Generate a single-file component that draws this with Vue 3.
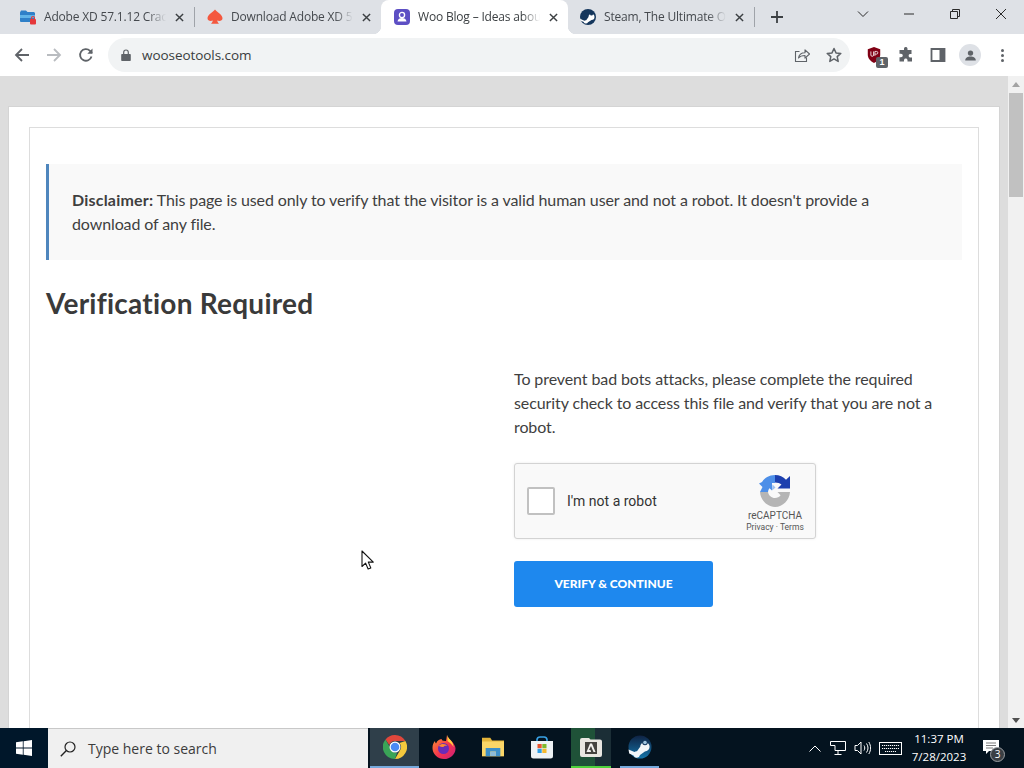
<script setup>
const taskApps = ['chrome', 'firefox', 'folder', 'store', 'adobe', 'steam']
</script>

<template>
  <div class="screen">
    <header class="tabstrip">
      <div class="tab">
        <svg class="fav" viewBox="0 0 16 16"><path d="M0 3.500 1 1.500h5l1.500 1.500H14l1 1V13H1a1 1 0 0 1-1-1z" fill="#2f80c8"/><path d="M0 6h15v3H0z" fill="#61b4e8"/><rect x="10" y="10" width="6" height="5.500" rx="1" fill="#e5383b"/><path d="M11.500 10.500V9a1.500 1.500 0 0 1 3 0v1.500" fill="none" stroke="#e5383b" stroke-width="1.100"/></svg>
        <span class="title">Adobe XD 57.1.12 Crack + Keygen</span>
        <svg class="close" viewBox="0 0 10 10"><path d="M1 1l8 8M9 1l-8 8"/></svg>
      </div>
      <i class="sep"></i>
      <div class="tab">
        <svg class="fav" viewBox="0 0 16 16"><path d="M8 .5C10 3.500 15.500 5.500 15.500 9.200c0 2.300-2.700 3.500-5.300 2.300.3 1.300.8 2.300 1.800 3.200H4c1-.9 1.500-1.900 1.800-3.200C3.200 12.700.5 11.500.5 9.200.5 5.500 6 3.500 8 .5z" fill="#f4583f"/></svg>
        <span class="title">Download Adobe XD 57.1.12 Free</span>
        <svg class="close" viewBox="0 0 10 10"><path d="M1 1l8 8M9 1l-8 8"/></svg>
      </div>
      <div class="tab active">
        <svg class="fav" viewBox="0 0 16 16"><rect width="16" height="16" rx="4" fill="#5d4fc4"/><circle cx="8" cy="6" r="2.600" fill="none" stroke="#fff" stroke-width="1.300"/><path d="M3.500 12.500c.3-2.500 2.200-3.500 4.500-3.500s4.200 1 4.500 3.500z" fill="#fff"/></svg>
        <span class="title">Woo Blog – Ideas about WordPress</span>
        <svg class="close" viewBox="0 0 10 10"><path d="M1 1l8 8M9 1l-8 8"/></svg>
      </div>
      <div class="tab last">
        <svg class="fav" viewBox="0 0 16 16"><circle cx="8" cy="8" r="8" fill="#14365c"/><path d="M0 9.800l4.400 1.900a2.300 2.300 0 0 1 1.800-.5L8.500 8a3 3 0 1 1 3 3L8 13.200A2.300 2.300 0 0 1 3.700 13L.4 11.500z" fill="#fff"/><circle cx="11.500" cy="5" r="1.500" fill="#14365c"/></svg>
        <span class="title">Steam, The Ultimate Online Game</span>
        <svg class="close" viewBox="0 0 10 10"><path d="M1 1l8 8M9 1l-8 8"/></svg>
      </div>
      <i class="sep"></i>
      <svg class="plus" viewBox="0 0 12 12"><path d="M6 0v12M0 6h12"/></svg>
      <div class="fill"></div>
      <div class="winctl">
        <svg viewBox="0 0 12 12"><path d="M1 3.500l5 5 5-5"/></svg>
        <svg viewBox="0 0 12 12"><path d="M1 6h10"/></svg>
        <svg viewBox="0 0 12 12"><path d="M1.500 3.500h7v7h-7zM3.500 3.500v-2h7v7h-2"/></svg>
        <svg viewBox="0 0 12 12"><path d="M1 1l10 10M11 1L1 11"/></svg>
      </div>
    </header>

    <nav class="toolbar">
      <svg class="nav" viewBox="0 0 16 16"><path d="M15 8H2M8 2 2 8l6 6" stroke="#5f6368"/></svg>
      <svg class="nav" viewBox="0 0 16 16"><path d="M1 8h13M8 2l6 6-6 6" stroke="#b9bcc0"/></svg>
      <svg class="nav" viewBox="0 0 16 16"><path d="M13.500 9.500A5.800 5.800 0 1 1 12 3.800L14 6" stroke="#5f6368"/><path d="M14.500 1.500v5.200H9.300z" fill="#5f6368"/></svg>
      <div class="omnibox">
        <svg class="lock" viewBox="0 0 10 12"><path d="M1 5h8a.8.8 0 0 1 .8.8v5.400A.8.8 0 0 1 9 12H1a.8.8 0 0 1-.8-.8V5.800A.8.8 0 0 1 1 5z" fill="#5f6368"/><path d="M2.700 5V3.300a2.300 2.300 0 0 1 4.600 0V5" fill="none" stroke="#5f6368" stroke-width="1.200"/></svg>
        <span class="url">wooseotools.com</span>
        <div class="fill"></div>
        <svg class="ombtn" viewBox="0 0 16 16"><path d="M5.500 4.500H1.500v10h11v-4" fill="none" stroke="#5f6368" stroke-width="1.100"/><path d="M4.500 11c.5-3.500 3-5.300 6.500-5.300V2.800l4.500 4.200-4.500 4.200V8.500c-2.700 0-5 .6-6.500 2.500z" fill="none" stroke="#5f6368" stroke-width="1.100" stroke-linejoin="round"/></svg>
        <svg class="ombtn" viewBox="0 0 16 16"><path d="M8 1.500l2 4.400 4.800.5-3.600 3.200 1 4.800L8 11.900l-4.200 2.500 1-4.800L1.200 6.400 6 5.900z" fill="none" stroke="#5f6368" stroke-width="1.500" stroke-linejoin="round"/></svg>
      </div>
      <div class="ext ublock">
        <svg viewBox="0 0 16 18"><path d="M8 0l7 2.500v6c0 4.500-3 7.500-7 9.500-4-2-7-5-7-9.500v-6z" fill="#800014"/><path d="M4.500 5v4a1.500 1.500 0 0 0 3 0V5M9 10V5h1.800a1.500 1.500 0 0 1 0 3H9" fill="none" stroke="#fff" stroke-width=".9"/></svg>
        <b class="badge">1</b>
      </div>
      <div class="ext">
        <svg viewBox="0 0 16 16"><path d="M6 1.500a1.800 1.800 0 0 1 3.500 0V3h4v4h-1.500a1.800 1.800 0 0 0 0 3.500H14v4H9.500V13a1.800 1.800 0 0 0-3.500 0v1.500H1.500V10.300H3a1.800 1.800 0 0 0 0-3.600H1.500V3H6z" fill="#5f6368"/></svg>
      </div>
      <div class="ext">
        <svg viewBox="0 0 16 16"><path d="M1.500 2h13v12h-13z" fill="none" stroke="#5f6368" stroke-width="1.800"/><path d="M9.500 2h5v12h-5z" fill="#5f6368"/></svg>
      </div>
      <div class="ext avatar">
        <svg viewBox="0 0 16 16"><circle cx="8" cy="5" r="3.300" fill="#5f6368"/><path d="M1.500 14c0-3.300 3-4.800 6.500-4.800s6.500 1.500 6.500 4.800z" fill="#5f6368"/></svg>
      </div>
      <div class="ext dots"><i></i><i></i><i></i></div>
    </nav>

    <div class="viewport">
      <main class="page">
        <article class="card">
          <section class="inner">
            <blockquote class="disclaimer"><strong>Disclaimer:</strong> This page is used only to verify that the visitor is a valid human user and not a robot. It doesn't provide a download of any file.</blockquote>
            <h2 class="heading">Verification Required</h2>
            <div class="columns">
              <div></div>
              <div class="verify">
                <p class="lead">To prevent bad bots attacks, please complete the required security check to access this file and verify that you are not a robot.</p>
                <div class="captcha">
                  <span class="check"></span>
                  <span class="robot">I'm not a robot</span>
                  <div class="brand">
                    <svg class="rc" viewBox="0 0 32 32">
                      <path d="M1 17h8c.6 3.500 3.500 6 7 6 2.300 0 4.300-1 5.600-2.700L18.500 17H31C30.500 25 24 32 16 32S1.500 25 1 17z" fill="#b5b5b5"/>
                      <path d="M0 8.500l3.500 3.500 0 0L1 17h8c.2-1.500.6-2.700 1.500-3.800L13 15.500V8h3V0C10 0 5.500 3 3 7z" fill="#4d8fe8"/>
                      <path d="M16 0c4.500 0 8.300 1.800 11 4.800L31 1v12.500H18.500l4-4C21 8.300 18.700 7.500 16 7.500z" fill="#1c3fae"/>
                      <path d="M13 15.500l3.500-3-3-3z" fill="#9cc0f0"/>
                    </svg>
                    <span class="rc-name">reCAPTCHA</span>
                    <span class="rc-links">Privacy · Terms</span>
                  </div>
                </div>
                <button class="continue">VERIFY &amp; CONTINUE</button>
              </div>
            </div>
          </section>
        </article>
      </main>
      <aside class="scrollbar">
        <i class="arrow up"></i>
        <i class="thumb"></i>
        <div class="fill"></div>
        <i class="arrow down"></i>
      </aside>
    </div>

    <footer class="taskbar">
      <div class="start">
        <svg viewBox="0 0 16 16"><path d="M0 2.300 6.800 1.300v6.300H0zM7.600 1.200 16 0v7.600H7.600zM0 8.400h6.800v6.300L0 13.700zM7.600 8.400H16V16l-8.400-1.200z" fill="#fff"/></svg>
      </div>
      <div class="search">
        <svg viewBox="0 0 16 16"><circle cx="10" cy="6" r="5" fill="none" stroke="#222" stroke-width="1.200"/><path d="M6.400 9.600.8 15.200" stroke="#222" stroke-width="1.400"/></svg>
        <span>Type here to search</span>
      </div>
      <div v-for="app in taskApps" :key="app" class="app" :class="app">
        <svg v-if="app === 'chrome'" viewBox="0 0 24 24"><path d="M12 0a12 12 0 0 1 10.400 6H12a6 6 0 0 0-5.700 4L2.500 4.500A12 12 0 0 1 12 0z" fill="#e0473c"/><path d="M22.400 6A12 12 0 0 1 12 24l5.200-9A6 6 0 0 0 16.500 8z" fill="#f5c93d"/><path d="M12 24A12 12 0 0 1 2.500 4.500L7.600 13.500A6 6 0 0 0 14 17.700z" fill="#3aa457"/><circle cx="12" cy="12" r="5.500" fill="#fff"/><circle cx="12" cy="12" r="4.300" fill="#4a8af4"/></svg>
        <svg v-else-if="app === 'firefox'" viewBox="0 0 24 24"><defs><linearGradient id="ff" x1="0" y1="0" x2="1" y2="1"><stop offset="0" stop-color="#ff9a2e"/><stop offset=".55" stop-color="#f5334f"/><stop offset="1" stop-color="#c81e7a"/></linearGradient></defs><path d="M15 0c.5 3 2.500 4 4 5.500 3 3 4.500 6 4.500 8A11.500 10.500 0 0 1 12 24 11.500 11 0 0 1 .5 13c0-3 1-5.500 2.500-7 0 1 .5 2 1 2.500C5.500 5 8 4 10 4c-1 1 1 2 4 2 .5-2 .5-4 1-6z" fill="url(#ff)"/><path d="M15.500 0c.2 3 3 4.500 4.500 7 1.200 2 1.500 4 1.500 5-1.500-3-4-4.500-6-6z" fill="#ffd23f"/><circle cx="11.500" cy="13.500" r="5.500" fill="#6a2bb8"/><path d="M6.500 11c3-3 7-2.500 9 0-2-.5-3.500 0-4 1-2 0-3.500-.5-5-1z" fill="#ff8a2e"/></svg>
        <svg v-else-if="app === 'folder'" viewBox="0 0 24 24"><path d="M0 2h9l2 3h13v17H0z" fill="#e5b53a"/><path d="M0 6h24v16H0z" fill="#fbd667"/><path d="M4 13h16v9h-5v-5H9v5H4z" fill="#3d8fc8"/><path d="M9 17h6v5H9z" fill="#8dbbd8"/></svg>
        <svg v-else-if="app === 'store'" viewBox="0 0 24 24"><path d="M7 7V4.500A3 3 0 0 1 10 2h4a3 3 0 0 1 3 2.500V7" fill="none" stroke="#39a2e6" stroke-width="1.600"/><path d="M1 6h22v15a2.500 2.500 0 0 1-2.500 2.500h-17A2.500 2.500 0 0 1 1 21z" fill="#eef2f5"/><rect x="7.500" y="9" width="4.200" height="4.200" fill="#e8552f"/><rect x="12.300" y="9" width="4.200" height="4.200" fill="#7eb92e"/><rect x="7.500" y="13.800" width="4.200" height="4.200" fill="#2e9ee6"/><rect x="12.300" y="13.800" width="4.200" height="4.200" fill="#f5b82e"/></svg>
        <svg v-else-if="app === 'adobe'" viewBox="0 0 22 20"><path d="M0 3a2 2 0 0 1 2-2h7l1.500 1.500H20a2 2 0 0 1 2 2V18a2 2 0 0 1-2 2H2a2 2 0 0 1-2-2z" fill="#e9e6e1"/><rect x="5" y="5" width="12" height="12" fill="#45423f"/><path d="M6.500 15 10 6.500h2L15.500 15h-2L11 9l-2 4h1.500l.6 2z" fill="#f3f1ee"/></svg>
        <svg v-else viewBox="0 0 24 24"><defs><linearGradient id="st" x1="0" y1="0" x2="0" y2="1"><stop offset="0" stop-color="#0f2344"/><stop offset="1" stop-color="#1474a8"/></linearGradient></defs><circle cx="12" cy="12" r="11.500" fill="url(#st)"/><path d="M.5 14.500l6 2.500a3.300 3.300 0 0 1 2.500-.7l3.200-4.500a4.700 4.700 0 1 1 4.700 4.700L12 20a3.400 3.400 0 0 1-6.500.5L1.200 18.500z" fill="#f2f6f9"/><circle cx="17" cy="7.500" r="2.800" fill="#12375e"/><circle cx="17" cy="7.500" r="1.800" fill="#9fc5e0"/></svg>
      </div>
      <div class="fill"></div>
      <div class="tray">
        <svg class="t-chev" viewBox="0 0 12 7"><path d="M.5 6.500 6 1l5.500 5.500" fill="none" stroke="#fff"/></svg>
        <svg class="t-net" viewBox="0 0 16 14"><path d="M.5.500h15v9H5V4.500H.5zM8 9.500v3.500M4.500 13.500h7" fill="none" stroke="#fff"/></svg>
        <svg class="t-vol" viewBox="0 0 17 14"><path d="M1 4.500h2.500L7 1v12L3.500 9.500H1z" fill="none" stroke="#fff"/><path d="M10 4.500c1 1.500 1 3.500 0 5M12.500 2.500c2 3 2 6 0 9M14.800 1c2.400 4 2.400 8 0 12" fill="none" stroke="#fff"/></svg>
        <svg class="t-key" viewBox="0 0 23 13"><rect x=".5" y=".5" width="22" height="12" fill="none" stroke="#fff"/><path d="M3 3.500h17M3 6.500h17M6 9.500h11" stroke="#fff" stroke-dasharray="1.200 .8"/></svg>
        <div class="clock"><span>11:37 PM</span><span>7/28/2023</span></div>
        <div class="notify">
          <svg viewBox="0 0 16 15"><path d="M0 0h16v11H6L3 14v-3H0z" fill="#fff"/><path d="M3 3h10M3 5.500h10M3 8h7" stroke="#444" stroke-width=".7"/></svg>
          <b>3</b>
        </div>
      </div>
    </footer>

    <svg class="cursor" viewBox="0 0 13 21"><path d="M1 1v15.500l3.600-3.400 2.500 5.900 2.700-1.100-2.500-5.800h5z" fill="#fff" stroke="#111" stroke-width="1.100" stroke-linejoin="round"/></svg>
  </div>
</template>

<style scoped>
.screen { position: relative; width: 1024px; height: 768px; display: flex; flex-direction: column; overflow: hidden; font-family: "Lato", sans-serif; background: #fff; }
.fill { flex: 1; }

.tabstrip { height: 34px; flex: none; display: flex; align-items: center; padding-left: 7px; background: #dee1e6; }
.tab { position: relative; width: 187px; height: 34px; flex: none; display: flex; align-items: center; padding-left: 13px; padding-right: 10px; box-sizing: border-box; color: #45494e; }
.tab.last { margin-left: -1px; }
.tab.active { background: #fff; border-radius: 8px 8px 0 0; color: #3c4043; padding-left: 13px; }
.tab.active::before, .tab.active::after { content: ""; position: absolute; bottom: 0; width: 8px; height: 8px; }
.tab.active::before { left: -8px; background: radial-gradient(circle at 0 0, transparent 8px, #fff 8.500px); }
.tab.active::after { right: -8px; background: radial-gradient(circle at 100% 0, transparent 8px, #fff 8.500px); }
.sep { width: 1px; height: 20px; background: #9fa3a9; flex: none; margin: 0 -1px 0 0; position: relative; }
.fav { width: 16px; height: 16px; flex: none; margin-right: 8px; }
.title { flex: 1; min-width: 0; white-space: nowrap; overflow: hidden; font: 12px/16px "Open Sans", sans-serif; letter-spacing: -.18px; -webkit-mask-image: linear-gradient(90deg, #000 85%, transparent); mask-image: linear-gradient(90deg, #000 85%, transparent); }
.close { width: 9px; height: 9px; flex: none; margin-left: 9px; fill: none; stroke: #3c4043; stroke-width: 1.600; }
.plus { width: 12px; height: 12px; flex: none; margin-left: 17px; fill: none; stroke: #3c4043; stroke-width: 1.800; }
.winctl { display: flex; align-self: flex-start; padding-top: 8px; padding-right: 17px; gap: 34px; }
.winctl svg { width: 12px; height: 12px; fill: none; stroke: #2a2a2a; stroke-width: 1; }

.toolbar { height: 42px; flex: none; display: flex; align-items: center; padding-left: 14px; background: #fff; box-sizing: border-box; }
.nav { width: 16px; height: 16px; flex: none; margin-right: 16px; fill: none; stroke-width: 1.800; }
.omnibox { width: 742px; height: 34px; flex: none; margin-left: -2px; display: flex; align-items: center; padding-left: 13px; box-sizing: border-box; border-radius: 17px; background: #f1f3f4; }
.lock { width: 10px; height: 12px; flex: none; margin-right: 11px; }
.url { font: 13.500px/18px "Open Sans", sans-serif; letter-spacing: -.06px; color: #3a3d40; }
.ombtn { width: 16px; height: 16px; flex: none; margin-right: 16px; }
.ombtn:last-child { margin-right: 8px; }
.ext { position: relative; width: 32px; height: 28px; flex: none; display: flex; align-items: center; justify-content: center; }
.ext svg { width: 16px; height: 16px; }
.ublock { margin-left: 8px; }
.badge { position: absolute; right: 2px; bottom: 1px; width: 12px; height: 11px; border-radius: 2px; background: #5f6368; color: #fff; font: 700 9px/11px "Liberation Sans", sans-serif; text-align: center; }
.avatar::before { content: ""; position: absolute; left: 5px; top: 3px; width: 22px; height: 22px; border-radius: 50%; background: #dee1e6; }
.avatar svg { position: relative; width: 13px; height: 13px; }
.dots { flex-direction: column; gap: 2px; }
.dots i { width: 3px; height: 3px; border-radius: 50%; background: #5f6368; }

.viewport { flex: 1; min-height: 0; display: flex; background: #ddd; }
.page { flex: 1; min-width: 0; overflow: hidden; padding: 30px 8px 0; box-sizing: border-box; }
.card { background: #fff; border: 1px solid #d4d4d4; border-bottom: 0; padding: 20px 20px 0; min-height: 640px; box-sizing: border-box; }
.inner { background: #fff; border: 1px solid #ddd; padding: 36px 16px 0; min-height: 640px; box-sizing: border-box; color: #3a3a3a; }
.disclaimer { margin: 0; padding: 24px 60px 24px 23px; border-left: 3px solid #4f86bd; background: #f9f9f9; font-size: 16px; line-height: 24px; letter-spacing: -.11px; color: #3f3f3f; }
.disclaimer strong { font-weight: 700; letter-spacing: .2px; }
.heading { margin: 25px 0 0; font-size: 28px; line-height: 36px; font-weight: 700; letter-spacing: .24px; color: #3a3a3a; }
.columns { display: grid; grid-template-columns: 468px 448px; margin-top: 46px; }
.lead { margin: 0; font-size: 16px; line-height: 24px; letter-spacing: -.1px; color: #3f3f3f; }
.captcha { margin-top: 24px; width: 302px; height: 76px; display: flex; align-items: center; box-sizing: border-box; padding-left: 12px; background: #f9f9f9; border: 1px solid #d3d3d3; border-radius: 3px; box-shadow: 0 0 3px rgba(0,0,0,.08); }
.check { width: 28px; height: 28px; flex: none; box-sizing: border-box; background: #fff; border: 2px solid #c1c1c1; border-radius: 2px; }
.robot { margin-left: 12px; font: 14px/18px "Roboto", sans-serif; color: #333; }
.brand { margin-left: auto; width: 78px; margin-right: 1px; align-self: flex-start; padding-top: 11px; display: flex; flex-direction: column; align-items: center; font-family: "Roboto", sans-serif; color: #555; }
.rc { width: 32px; height: 32px; }
.rc-name { margin-top: 2px; font-size: 10px; line-height: 13px; }
.rc-links { font-size: 8.500px; line-height: 11px; }
.continue { display: block; margin-top: 22px; width: 199px; height: 46px; border: 0; border-radius: 3px; background: #1e88ee; color: #fff; font: 900 12px/16px "Lato", sans-serif; padding: 0; }

.scrollbar { width: 16px; flex: none; display: flex; flex-direction: column; align-items: center; background: #f1f1f1; }
.thumb { width: 14px; height: 104px; margin-top: 1px; background: #c1c1c1; }
.arrow { width: 0; height: 0; flex: none; border-left: 4px solid transparent; border-right: 4px solid transparent; }
.arrow.up { margin: 6px 0 5px; border-bottom: 5px solid #a3a3a3; }
.arrow.down { margin: 5px 0 5px; border-top: 5px solid #505050; }

.taskbar { height: 40px; flex: none; display: flex; align-items: stretch; background: #04131f; }
.start { width: 48px; flex: none; display: flex; align-items: center; justify-content: center; background: #00172a; }
.start svg { width: 16px; height: 16px; }
.search { width: 320px; flex: none; margin-right: 2px; display: flex; align-items: center; padding-left: 12px; box-sizing: border-box; background: #f0f0f0; border-top: 1px solid #c8c8c8; }
.search svg { width: 16px; height: 16px; margin-right: 12px; }
.search span { font: 14px/18px "Open Sans", sans-serif; color: #3c3c3c; }
.app { width: 49px; flex: none; display: flex; align-items: center; justify-content: center; box-sizing: border-box; border-bottom: 2px solid transparent; }
.app svg { width: 24px; height: 24px; }
.app.folder svg { width: 22px; height: 22px; }
.app.chrome { background: #2f3f4a; border-bottom-color: #76a9dc; }
.app.adobe { margin: 0 4px 0 5px; width: 40px; background: linear-gradient(90deg, #1f5238 60%, #1b2e36 60%); border-bottom-color: #4fd23c; }
.app.adobe svg { width: 22px; height: 20px; }
.app.steam { margin: 0 5px; width: 39px; border-bottom-color: #76a9dc; }
.tray { display: flex; align-items: center; color: #fff; }
.t-chev { width: 12px; height: 7px; margin-right: 9px; }
.t-net { width: 16px; height: 14px; margin-right: 8px; }
.t-vol { width: 17px; height: 14px; margin-right: 8px; }
.t-key { width: 23px; height: 13px; margin-right: 1px; }
.clock { width: 72px; margin-right: 8px; padding-bottom: 1px; display: flex; flex-direction: column; align-items: center; font: 11.500px/18px "Open Sans", sans-serif; }
.notify { position: relative; width: 41px; height: 40px; flex: none; }
.notify svg { position: absolute; left: 0; top: 12px; width: 16px; height: 15px; }
.notify b { position: absolute; left: 7px; top: 19px; width: 13px; height: 13px; border-radius: 50%; background: #3a3f44; border: 1.500px solid #9a9ea3; color: #fff; font: 400 10px/13px "Open Sans", sans-serif; text-align: center; }

.cursor { position: absolute; left: 361px; top: 550px; width: 13px; height: 21px; }
</style>

<style>
html, body { margin: 0; overflow: hidden; }
</style>
